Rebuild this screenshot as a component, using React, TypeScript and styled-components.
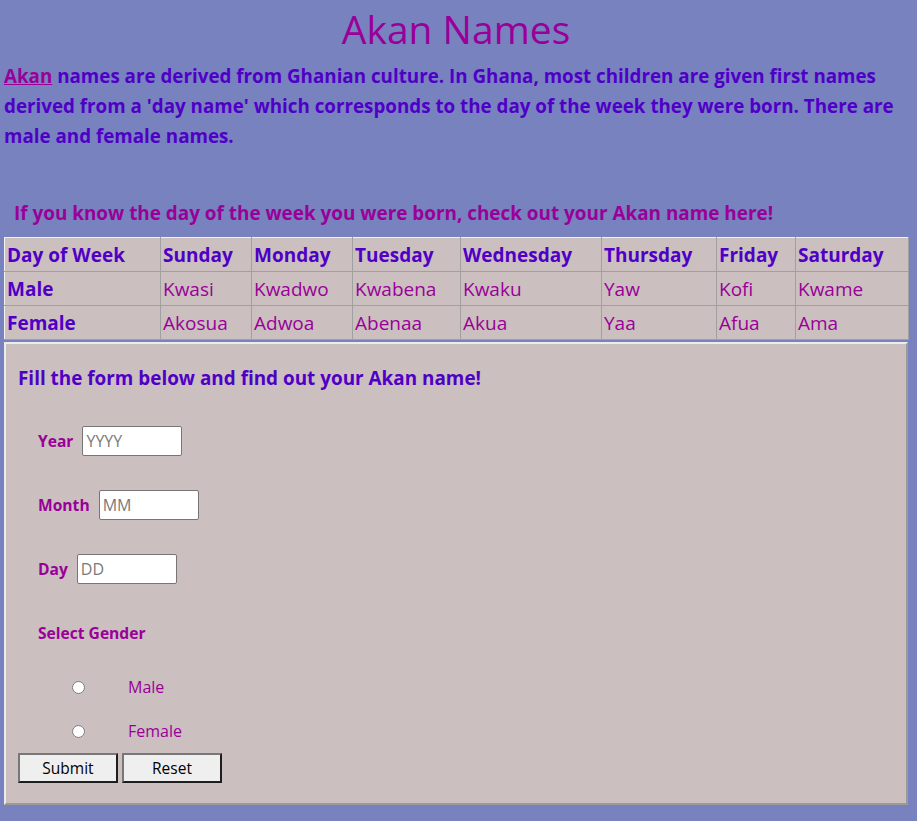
import React from "react";
import styled, { createGlobalStyle } from "styled-components";

const GlobalStyle = createGlobalStyle`
  html, body {
    margin: 0;
    padding: 0;
    background: #7782bf;
  }
  body {
    font-family: "Open Sans", "Noto Sans", sans-serif;
  }
`;

const VIOLET = "#5000c6";
const MAGENTA = "#9a0099";
const PANEL = "#cbbfbf";

const Page = styled.div`
  padding: 0 9px 17px 4px;
  font-family: "Open Sans", "Noto Sans", sans-serif;
`;

const Title = styled.h1`
  margin: 5px 0 0;
  font-size: 39px;
  line-height: 48px;
  font-weight: 500;
  text-align: center;
  color: ${MAGENTA};
`;

const Intro = styled.p`
  margin: 8px 0 0;
  font-size: 18.8px;
  line-height: 30px;
  font-weight: 700;
  color: ${VIOLET};
`;

const IntroLink = styled.a`
  color: ${MAGENTA};
  text-decoration: underline;
`;

const Prompt = styled.h2`
  margin: 47px 0 9px;
  padding-left: 10px;
  font-size: 18.9px;
  line-height: 30px;
  font-weight: 700;
  color: ${MAGENTA};
`;

const Table = styled.table`
  width: 904px;
  table-layout: fixed;
  border-collapse: collapse;
  background: ${PANEL};
  border-top: 1px solid #a8a8a8;
  border-left: 1px solid #a8a8a8;
`;

const Cell = styled.td<{ $head?: boolean }>`
  height: 34px;
  box-sizing: border-box;
  padding: 0 2px;
  font-size: 19px;
  line-height: 30px;
  font-weight: ${(p) => (p.$head ? 700 : 400)};
  color: ${(p) => (p.$head ? VIOLET : MAGENTA)};
  border-top: 1px solid #f2f2f2;
  border-left: 1px solid #f2f2f2;
  border-right: 1px solid #a0a0a0;
  border-bottom: 1px solid #a0a0a0;
  white-space: nowrap;
  vertical-align: middle;
`;

const Panel = styled.form`
  margin-top: 2px;
  width: 904px;
  box-sizing: border-box;
  background: ${PANEL};
  border: 2px solid;
  border-color: #ececec #9a9a9a #9a9a9a #ececec;
  padding: 19px 12px 20px;
`;

const PanelTitle = styled.h3`
  margin: 0;
  font-size: 18.9px;
  line-height: 30px;
  font-weight: 700;
  color: ${VIOLET};
`;

const FieldRow = styled.div<{ $top: number }>`
  display: flex;
  align-items: center;
  gap: 9px;
  height: 30px;
  margin-top: ${(p) => p.$top}px;
  padding-left: 20px;
`;

const FieldLabel = styled.label`
  font-size: 15.6px;
  font-weight: 700;
  color: ${MAGENTA};
`;

const TextInput = styled.input`
  width: 100px;
  height: 30px;
  box-sizing: border-box;
  border: 1px solid #767676;
  border-radius: 2px;
  background: #fff;
  padding: 1px 3px;
  font-family: "Open Sans", "Noto Sans", sans-serif;
  font-size: 16px;
  &::placeholder {
    color: #7a7a7a;
  }
`;

const RadioRow = styled.div<{ $top: number }>`
  display: flex;
  align-items: center;
  height: 30px;
  margin-top: ${(p) => p.$top}px;
  padding-left: 54px;
`;

const Radio = styled.input`
  width: 13px;
  height: 13px;
  margin: 0 43px 0 0;
  accent-color: #fff;
`;

const RadioLabel = styled.label`
  font-size: 16px;
  color: ${MAGENTA};
`;

const Buttons = styled.div`
  display: flex;
  gap: 4px;
  margin-top: 7px;
`;

const Button = styled.button`
  width: 100px;
  height: 30px;
  box-sizing: border-box;
  background: #efefef;
  border: 2px solid;
  border-color: #777 #1e1e1e #1e1e1e #777;
  font-family: "Open Sans", "Noto Sans", sans-serif;
  font-size: 15.5px;
  color: #000;
  padding: 0;
`;

const days = ["Sunday", "Monday", "Tuesday", "Wednesday", "Thursday", "Friday", "Saturday"];
const male = ["Kwasi", "Kwadwo", "Kwabena", "Kwaku", "Yaw", "Kofi", "Kwame"];
const female = ["Akosua", "Adwoa", "Abenaa", "Akua", "Yaa", "Afua", "Ama"];
const widths = [156, 91, 101, 108, 141, 115, 79, 113];

export default function App() {
  return (
    <>
      <GlobalStyle />
      <Page>
        <Title>Akan Names</Title>
        <Intro>
          <IntroLink href="#">Akan</IntroLink> names are derived from Ghanian culture. In Ghana, most
          children are given first names derived from a 'day name' which corresponds to the day of the
          week they were born. There are male and female names.
        </Intro>
        <Prompt>If you know the day of the week you were born, check out your Akan name here!</Prompt>
        <Table>
          <colgroup>
            {widths.map((w, i) => (
              <col key={i} style={{ width: w }} />
            ))}
          </colgroup>
          <tbody>
            <tr>
              <Cell $head>Day of Week</Cell>
              {days.map((d) => (
                <Cell $head key={d}>
                  {d}
                </Cell>
              ))}
            </tr>
            <tr>
              <Cell $head>Male</Cell>
              {male.map((d) => (
                <Cell key={d}>{d}</Cell>
              ))}
            </tr>
            <tr>
              <Cell $head>Female</Cell>
              {female.map((d) => (
                <Cell key={d}>{d}</Cell>
              ))}
            </tr>
          </tbody>
        </Table>
        <Panel onSubmit={(e) => e.preventDefault()}>
          <PanelTitle>Fill the form below and find out your Akan name!</PanelTitle>
          <FieldRow $top={33}>
            <FieldLabel htmlFor="year">Year</FieldLabel>
            <TextInput id="year" placeholder="YYYY" />
          </FieldRow>
          <FieldRow $top={34}>
            <FieldLabel htmlFor="month">Month</FieldLabel>
            <TextInput id="month" placeholder="MM" />
          </FieldRow>
          <FieldRow $top={34}>
            <FieldLabel htmlFor="day">Day</FieldLabel>
            <TextInput id="day" placeholder="DD" />
          </FieldRow>
          <FieldRow $top={34}>
            <FieldLabel>Select Gender</FieldLabel>
          </FieldRow>
          <RadioRow $top={24}>
            <Radio type="radio" name="gender" id="male" />
            <RadioLabel htmlFor="male">Male</RadioLabel>
          </RadioRow>
          <RadioRow $top={14}>
            <Radio type="radio" name="gender" id="female" />
            <RadioLabel htmlFor="female">Female</RadioLabel>
          </RadioRow>
          <Buttons>
            <Button type="submit">Submit</Button>
            <Button type="reset">Reset</Button>
          </Buttons>
        </Panel>
      </Page>
    </>
  );
}
